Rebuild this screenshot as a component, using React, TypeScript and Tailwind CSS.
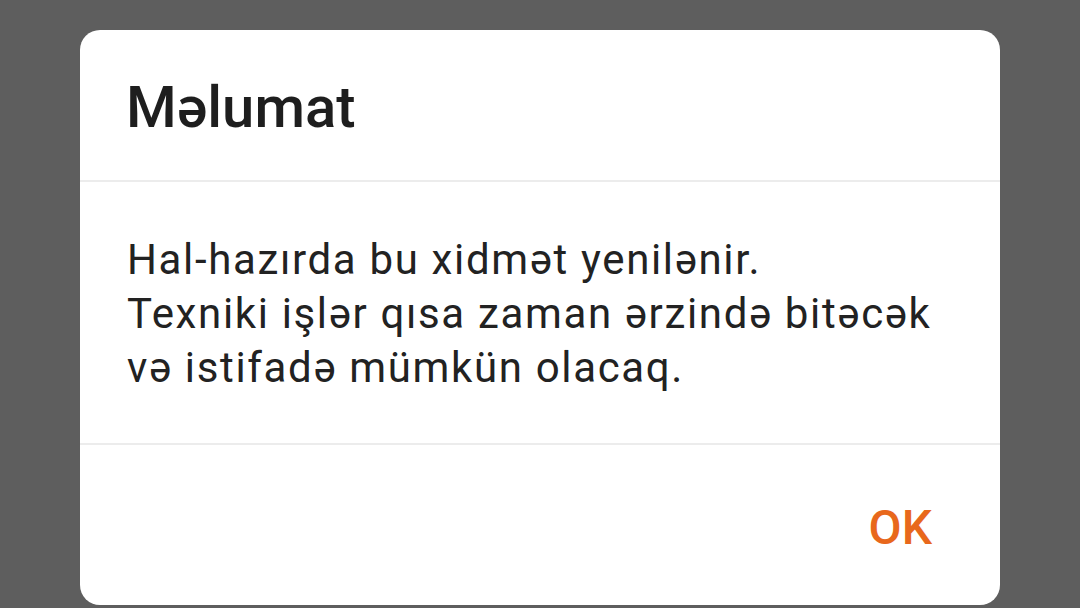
export default function App() {
  return (
    <div
      className="h-[608px] w-[1080px] overflow-hidden bg-[#5e5e5e] pt-[30px] pl-[80px]"
      style={{ fontFamily: 'Roboto, "Noto Sans", sans-serif' }}
    >
      <div className="w-[920px] h-[575px] bg-white rounded-[20px] flex flex-col">
        <div className="pl-[46px] pt-[43px] pb-[39px]">
          <h1 className="text-[58px] leading-[68px] font-medium text-[#1e1e1e]">Məlumat</h1>
        </div>
        <div className="h-[2px] bg-[#ececec]" />
        <div className="pl-[47px] pt-[51px] pb-[48px] text-[42px] leading-[54px] tracking-[1.65px] text-[#222222]">
          <p>Hal-hazırda bu xidmət yenilənir.</p>
          <p>Texniki işlər qısa zaman ərzində bitəcək</p>
          <p>və istifadə mümkün olacaq.</p>
        </div>
        <div className="h-[2px] bg-[#ececec]" />
        <div className="flex justify-end pr-[68px] pt-[55px]">
          <button className="text-[48px] leading-[56px] font-medium text-[#e8681c]">OK</button>
        </div>
      </div>
    </div>
  );
}
